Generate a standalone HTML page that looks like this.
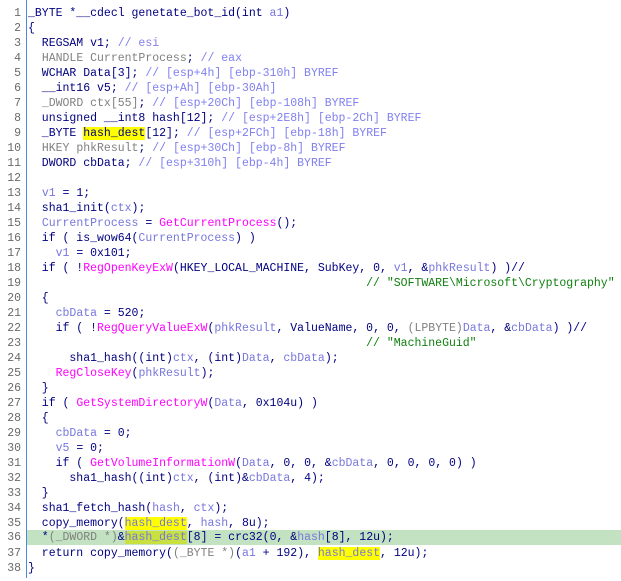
<!DOCTYPE html>
<html><head><meta charset="utf-8"><style>
html,body{margin:0;padding:0;background:#fff;width:621px;height:581px;overflow:hidden}
body{position:relative;font-family:"Liberation Mono",monospace;font-size:11.5px}
.bar{position:absolute;left:26px;top:0;width:1px;height:578px;background:#4a8ad8}
.ln{position:absolute;left:0;width:21px;text-align:right;color:#6a6a6a;height:15px;line-height:15px}
.l{position:absolute;left:28px;right:0;white-space:pre;color:#000080;height:15px;line-height:15px}
.hl{left:27px;padding-left:1px}
.g{color:#808080}.v{color:#7777dd}.c{color:#8080f0}.f{color:#ff00ff}.s{color:#108010}
.y{background:#ffff00}.hl{background:#c2e2c2}.yg{background:#c8e040}
</style></head><body>
<div class="bar"></div>
<div id="nums"></div>
<div class="l" style="top:6px">_BYTE *__cdecl genetate_bot_id(int <span class="v">a1</span>)</div>
<div class="l" style="top:21px">{</div>
<div class="l" style="top:36px">  REGSAM v1; <span class="c">// esi</span></div>
<div class="l" style="top:51px">  <span class="g">HANDLE CurrentProcess</span>; <span class="c">// eax</span></div>
<div class="l" style="top:66px">  WCHAR Data[3]; <span class="c">// [esp+4h] [ebp-310h] BYREF</span></div>
<div class="l" style="top:81px">  __int16 v5; <span class="c">// [esp+Ah] [ebp-30Ah]</span></div>
<div class="l" style="top:96px">  <span class="g">_DWORD ctx[55]</span>; <span class="c">// [esp+20Ch] [ebp-108h] BYREF</span></div>
<div class="l" style="top:111px">  unsigned __int8 hash[12]; <span class="c">// [esp+2E8h] [ebp-2Ch] BYREF</span></div>
<div class="l" style="top:126px">  _BYTE <span class="y">hash_dest</span>[12]; <span class="c">// [esp+2FCh] [ebp-18h] BYREF</span></div>
<div class="l" style="top:141px">  <span class="g">HKEY phkResult</span>; <span class="c">// [esp+30Ch] [ebp-8h] BYREF</span></div>
<div class="l" style="top:156px">  DWORD cbData; <span class="c">// [esp+310h] [ebp-4h] BYREF</span></div>
<div class="l" style="top:171px"></div>
<div class="l" style="top:186px">  <span class="v">v1</span> = 1;</div>
<div class="l" style="top:201px">  sha1_init(<span class="v">ctx</span>);</div>
<div class="l" style="top:216px">  <span class="v">CurrentProcess</span> = <span class="f">GetCurrentProcess</span>();</div>
<div class="l" style="top:231px">  if ( is_wow64(<span class="v">CurrentProcess</span>) )</div>
<div class="l" style="top:246px">    <span class="v">v1</span> = 0x101;</div>
<div class="l" style="top:261px">  if ( !<span class="f">RegOpenKeyExW</span>(HKEY_LOCAL_MACHINE, SubKey, 0, <span class="v">v1</span>, &amp;<span class="v">phkResult</span>) )//</div>
<div class="l" style="top:276px">                                                 <span class="s">// "SOFTWARE\Microsoft\Cryptography"</span></div>
<div class="l" style="top:291px">  {</div>
<div class="l" style="top:306px">    <span class="v">cbData</span> = 520;</div>
<div class="l" style="top:321px">    if ( !<span class="f">RegQueryValueExW</span>(<span class="v">phkResult</span>, ValueName, 0, 0, <span class="g">(LPBYTE)</span><span class="v">Data</span>, &amp;<span class="v">cbData</span>) )//</div>
<div class="l" style="top:336px">                                                 <span class="s">// "MachineGuid"</span></div>
<div class="l" style="top:351px">      sha1_hash((int)<span class="v">ctx</span>, (int)<span class="v">Data</span>, <span class="v">cbData</span>);</div>
<div class="l" style="top:366px">    <span class="f">RegCloseKey</span>(<span class="v">phkResult</span>);</div>
<div class="l" style="top:381px">  }</div>
<div class="l" style="top:396px">  if ( <span class="f">GetSystemDirectoryW</span>(<span class="v">Data</span>, 0x104u) )</div>
<div class="l" style="top:411px">  {</div>
<div class="l" style="top:426px">    <span class="v">cbData</span> = 0;</div>
<div class="l" style="top:441px">    <span class="v">v5</span> = 0;</div>
<div class="l" style="top:456px">    if ( <span class="f">GetVolumeInformationW</span>(<span class="v">Data</span>, 0, 0, &amp;<span class="v">cbData</span>, 0, 0, 0, 0) )</div>
<div class="l" style="top:471px">      sha1_hash((int)<span class="v">ctx</span>, (int)&amp;<span class="v">cbData</span>, 4);</div>
<div class="l" style="top:486px">  }</div>
<div class="l" style="top:501px">  sha1_fetch_hash(<span class="v">hash</span>, <span class="v">ctx</span>);</div>
<div class="l" style="top:516px">  copy_memory(<span class="y v">hash_dest</span>, <span class="v">hash</span>, 8u);</div>
<div class="l hl" style="top:530px">  *<span class="g">(_DWORD *)</span>&amp;<span class="yg v">hash_dest</span>[8] = crc32(0, &amp;<span class="v">hash</span>[8], 12u);</div>
<div class="l" style="top:546px">  return copy_memory(<span class="g">(_BYTE *)</span>(<span class="v">a1</span> + 192), <span class="y v">hash_dest</span>, 12u);</div>
<div class="l" style="top:561px">}</div>
<script>
var h='';for(var i=1;i<=38;i++){var t=6+(i-1)*15;if(i==36)t=530;h+='<div class="ln" style="top:'+t+'px">'+i+'</div>';}
document.getElementById('nums').innerHTML=h;
</script>
</body></html>
